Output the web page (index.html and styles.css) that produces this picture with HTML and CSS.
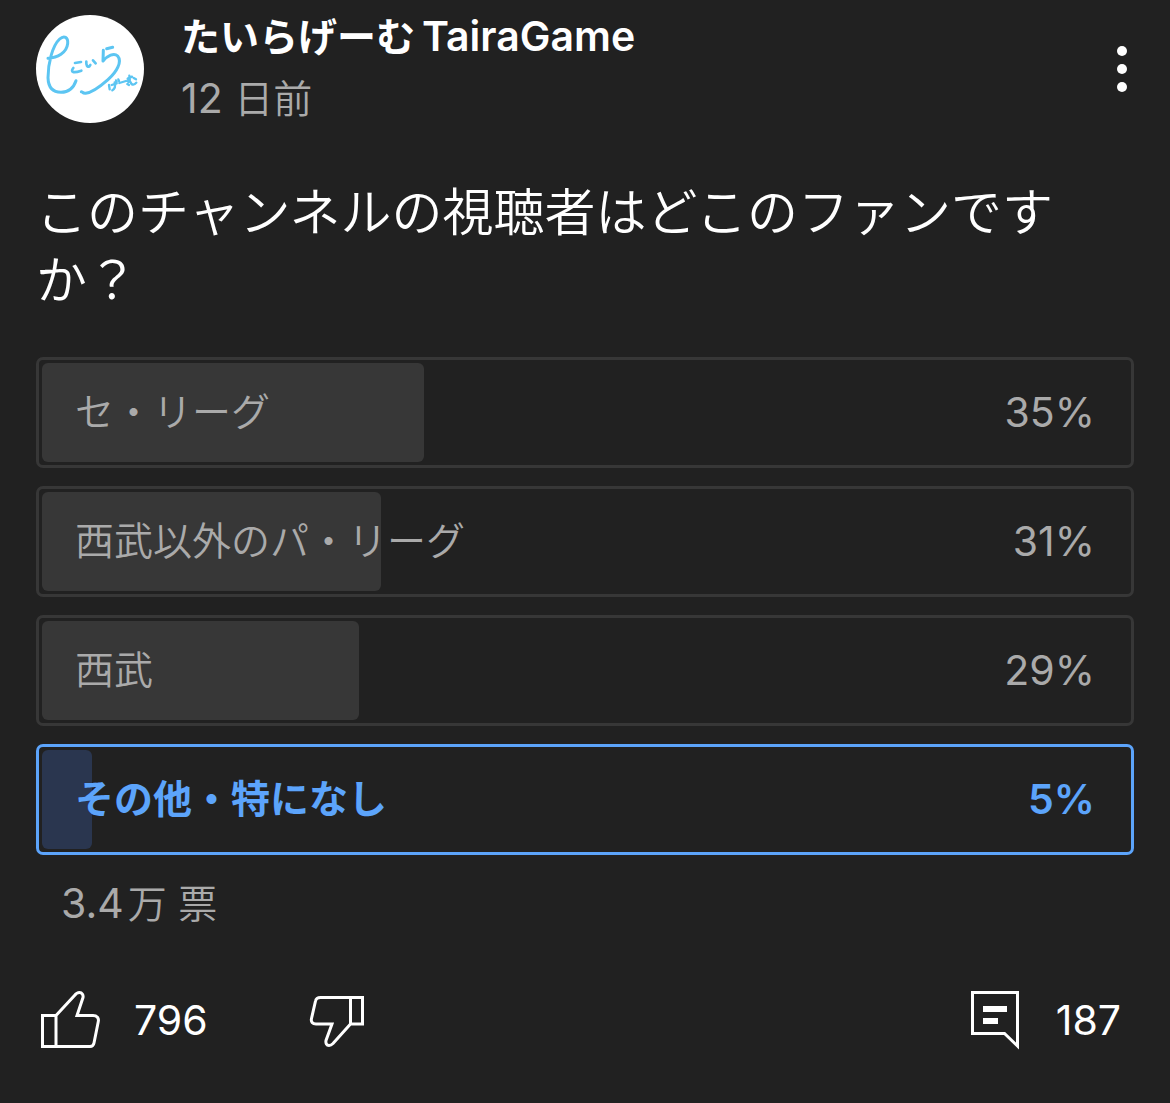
FILE: index.html
```html
<!DOCTYPE html>
<html lang="ja">
<head>
<meta charset="utf-8">
<meta name="viewport" content="width=device-width, initial-scale=1">
<title>たいらげーむTairaGame</title>
<link rel="stylesheet" href="styles.css">
</head>
<body>
<article class="post">
  <header class="post-header">
    <svg class="avatar" viewBox="48 44 324 324" role="img" aria-label="たいらげーむ">
      <circle cx="210" cy="206" r="162" fill="#fff"/>
      <g fill="none" stroke="#5cc5f2" stroke-width="8" stroke-linecap="round" stroke-linejoin="round">
        <path stroke-width="9" d="M84 174C112 172 140 158 143 130C145 110 132 104 119 116C97 136 84 190 84 232C85 263 100 276 123 276C148 275 162 259 168 241"/>
        <path d="M165 188L183 185M160 203C150 216 160 219 184 211M199 184C198 194 202 202 208 198L211 194M219 180L227 189"/>
        <path stroke-width="9" d="M260 145L278 141M250 150L249 182C262 166 282 156 293 167C307 184 291 214 264 238C239 260 216 277 197 279C188 280 187 274 184 274"/>
        <path stroke-width="7" d="M267 254L269 267M275 254L290 249M284 246C287 257 285 265 277 270M288 240L290 245M295 237L297 242M298 248L318 242M323 235L336 229M328 226C329 237 332 243 326 245C320 242 329 237 332 246C335 256 344 254 349 247M341 233L348 237M322 251L327 254"/>
      </g>
    </svg>
    <div class="byline">
      <a class="author" href="#">たいらげーむ<span class="latin">TairaGame</span></a>
      <time class="date"><span class="latin">12 </span>日前</time>
    </div>
    <button class="menu" type="button" aria-label="メニュー">
      <svg width="12" height="48" viewBox="0 0 12 48" fill="#fff"><circle cx="6" cy="6" r="5"/><circle cx="6" cy="24" r="5"/><circle cx="6" cy="42" r="5"/></svg>
    </button>
  </header>

  <p class="question">このチャンネルの視聴者はどこのファンですか？</p>

  <section class="poll" aria-label="アンケート">
    <button class="option" type="button"><span class="fill" style="width:35%"></span><span class="row"><span class="label">セ・リーグ</span><span class="latin">35%</span></span></button>
    <button class="option" type="button"><span class="fill" style="width:31%"></span><span class="row"><span class="label">西武以外のパ・リーグ</span><span class="latin">31%</span></span></button>
    <button class="option" type="button"><span class="fill" style="width:29%"></span><span class="row"><span class="label">西武</span><span class="latin">29%</span></span></button>
    <button class="option selected" type="button" aria-pressed="true"><span class="fill" style="width:4.6%"></span><span class="row"><span class="label">その他・特になし</span><span class="latin">5%</span></span></button>
  </section>
  <p class="votes"><span class="latin">3.4</span>万<span class="latin"> </span>票</p>

  <footer class="actions">
    <button class="action" type="button" aria-label="高評価 796">
      <svg width="60" height="60" viewBox="0 0 60 60" fill="none" stroke="#fff" stroke-width="3"><path d="M2.500 25.500H16V56.500H2.500ZM16 25.500L34.500 5.500C36 3.500 37.500 2.500 39.500 2.500C42 2.500 43.500 5 43 7.500L37 25.500H53C57 25.500 59 28 58.300 31.500L54 53C53.500 55.500 52 56.500 50 56.500H16"/></svg>
      <span class="latin">796</span>
    </button>
    <button class="action dislike" type="button" aria-label="低評価">
      <svg width="60" height="60" viewBox="0 0 60 60" fill="none" stroke="#fff" stroke-width="3"><path d="M41.500 7.500H53.500V34H41.500ZM41.500 7.500H11.500C8.500 7.500 7 8.500 6.500 11L2.500 28.500C1.700 32 3.500 34 7 34H23L17 50.500C16.500 53 17.500 55.500 20 55.500C21.500 55.500 22.500 55 24 53.500L41.500 34"/></svg>
    </button>
    <button class="action comments" type="button" aria-label="コメント 187">
      <svg width="50" height="60" viewBox="0 0 50 60"><path d="M2.500 2.500H47.500V56L34.500 43.500H2.500Z" fill="none" stroke="#fff" stroke-width="3"/><path d="M13 16H37V22H13ZM13 28H28V34H13Z" fill="#fff"/></svg>
      <span class="latin">187</span>
    </button>
  </footer>
</article>
</body>
</html>
```
FILE: styles.css
```css
* { box-sizing: border-box; }
body {
  margin: 0;
  background: #212121;
  color: #fff;
  font-family: "Noto Sans CJK JP", sans-serif;
  font-size: 39px;
  font-weight: 350;
  line-height: 60px;
}
button {
  border: 0;
  padding: 0;
  background: none;
  color: inherit;
  font: inherit;
  cursor: pointer;
}
svg { display: block; flex: none; }
p { margin: 0; }
.latin { font-family: Inter, sans-serif; font-size: 41px; font-weight: 400; white-space: pre; }

.post { padding: 4px 36px 48px; }
.post-header { display: flex; align-items: flex-start; }
.avatar { width: 108px; height: 108px; margin-top: 11px; }
.byline { display: flex; flex-direction: column; flex: 1; margin-left: 37px; }
.author { color: #fff; font-weight: 700; text-decoration: none; }
.author .latin { margin-left: 7px; font-weight: 600; }
.date { color: #aaa; }
.menu { margin: 41px 6px 0 0; }

.question { margin-top: 47px; padding-right: 48px; font-size: 51px; line-height: 68px; }

.poll { display: flex; flex-direction: column; gap: 18px; margin-top: 46px; }
.option {
  display: grid;
  height: 111px;
  padding: 3px 0;
  border: 3px solid #373737;
  border-radius: 7px;
  color: #aaa;
  text-align: left;
}
.fill, .row { grid-area: 1 / 1; }
.fill { margin-left: 3px; border-radius: 6px; background: #373737; }
.row { display: flex; justify-content: space-between; align-items: center; padding: 0 36px 2px; }
.label { padding-bottom: 6px; }
.selected { border-color: #5ca4fb; color: #5ca4fb; font-weight: 700; }
.selected .fill { background: #2a364f; }
.selected .latin { font-weight: 600; }
.votes { margin-top: 16px; padding-left: 25px; color: #aaa; }
.votes .latin:first-child { margin-right: 4px; }

.actions { display: flex; align-items: center; margin-top: 57px; padding: 0 13px 0 4px; }
.action { display: flex; align-items: center; gap: 34px; }
.dislike { margin-left: 101px; }
.comments { gap: 36px; margin-left: auto; }
```
